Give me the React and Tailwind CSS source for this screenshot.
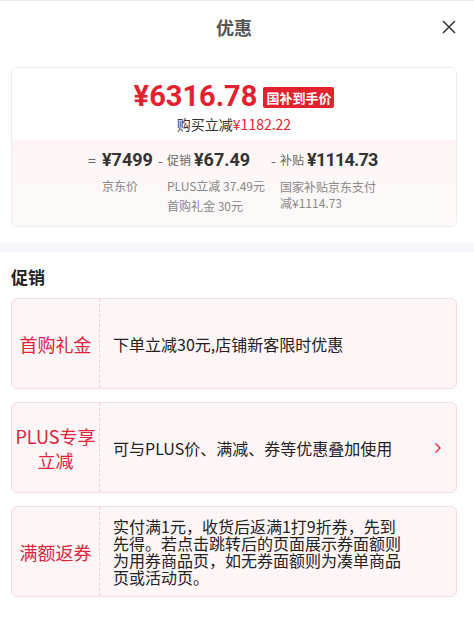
import React from "react";

const CJK = "font-['Noto_Sans_CJK_SC','Noto_Sans',sans-serif]";
const NUM = "font-['Roboto','Noto_Sans_CJK_SC',sans-serif]";

function Promo({ label, children, chevron, textClass }) {
  return (
    <div className="flex h-[91px] rounded-[6px] border border-[#f3dcdf] bg-[#fdf5f6]">
      <div className="flex w-[88px] shrink-0 items-center justify-center border-r border-dashed border-[#e6d3d6] text-center text-[18px] leading-[24px] text-[#e0243c]">
        {label}
      </div>
      <div className="flex flex-1 items-center pl-[13px] pr-[14px]">
        <div className={"flex-1 text-[#222] " + (textClass || "text-[16px] leading-[20px]")}>{children}</div>
        {chevron && (
          <svg width="8" height="12" viewBox="0 0 8 12" className="shrink-0">
            <polyline points="1.5,1.5 6,6 1.5,10.5" fill="none" stroke="#e0243c" strokeWidth="1.4" />
          </svg>
        )}
      </div>
    </div>
  );
}

export default function App() {
  return (
    <div className={"min-h-[633px] w-[474px] border-t border-[#e8e8e8] bg-white " + CJK}>
      {/* header */}
      <div className="relative flex h-[52px] items-center justify-center pr-[6px]">
        <span className="text-[18px] font-bold text-[#555]">优惠</span>
        <svg width="14" height="14" viewBox="0 0 14 14" className="absolute right-[18px] top-[19px]">
          <path d="M1 1 L13 13 M13 1 L1 13" stroke="#333" strokeWidth="1.5" fill="none" />
        </svg>
      </div>

      {/* price card */}
      <div className="pl-[11px] pr-[17px] pt-[14px]">
        <div className="overflow-hidden rounded-[6px] border border-[#ececec]">
          <div className="flex flex-col items-center bg-white pb-[7px] pt-[10px]">
            <div className="flex h-[36px] items-center">
              <span className={"text-[29px] font-bold leading-[36px] text-[#e4212f] " + NUM}>¥6316.78</span>
              <span className="ml-[6px] mt-[3px] rounded-[2px] bg-[#e4212f] px-[3px] text-[13px] font-bold leading-[21px] text-white">国补到手价</span>
            </div>
            <div className="mt-[1px] text-[14px] leading-[18px] text-[#333]">
              购买立减<span className="text-[#e4212f]">¥1182.22</span>
            </div>
          </div>
          <div className="flex justify-center bg-gradient-to-b from-[#fdf5f5] to-[#fdf9f9] pb-[10px] pt-[8px]">
            <div className="flex">
              <span className="w-[14px] text-[14px] leading-[24px] text-[#666]">=</span>
              <div className="flex flex-col">
                <span className={"text-[18px] font-bold leading-[24px] text-[#333] " + NUM}>¥7499</span>
                <span className="mt-[4px] text-[12px] leading-[20px] text-[#888]">京东价</span>
              </div>
            </div>
            <div className="ml-[5px] flex">
              <span className="w-[9px] text-[14px] leading-[24px] text-[#666]">-</span>
              <div className="flex flex-col">
                <div className="flex items-center leading-[24px]">
                  <span className="text-[12px] text-[#666]">促销</span>
                  <span className={"ml-[3px] text-[18px] font-bold text-[#333] " + NUM}>¥67.49</span>
                </div>
                <span className="mt-[4px] text-[12px] leading-[20px] text-[#888]">PLUS立减 37.49元</span>
                <span className="text-[12px] leading-[20px] text-[#888]">首购礼金 30元</span>
              </div>
            </div>
            <div className="ml-[6px] flex">
              <span className="w-[9px] text-[14px] leading-[24px] text-[#666]">-</span>
              <div className="flex w-[100px] flex-col">
                <div className="flex items-center leading-[24px]">
                  <span className="text-[12px] text-[#666]">补贴</span>
                  <span className={"ml-[3px] text-[18px] font-bold tracking-[-0.8px] text-[#333] " + NUM}>¥1114.73</span>
                </div>
                <span className="mt-[7px] w-[98px] text-[12px] leading-[16px] text-[#888]">国家补贴京东支付减¥1114.73</span>
              </div>
            </div>
          </div>
        </div>
      </div>

      {/* band */}
      <div className="mt-[16px] h-[9px] bg-[#f5f7fa]" />

      {/* promotions */}
      <div className="pl-[11px] pr-[17px] pt-[13px]">
        <div className="text-[17px] font-bold leading-[24px] text-[#222]">促销</div>
        <div className="mt-[9px] flex flex-col gap-[13px]">
          <Promo label="首购礼金">下单立减30元,店铺新客限时优惠</Promo>
          <Promo label={<span>PLUS专享<br />立减</span>} chevron>
            可与PLUS价、满减、券等优惠叠加使用
          </Promo>
          <Promo label="满额返券" textClass="max-w-[292px] text-[16px] leading-[17px]">
            实付满1元，收货后返满1打9折券，先到先得。若点击跳转后的页面展示券面额则为用券商品页，如无券面额则为凑单商品页或活动页。
          </Promo>
        </div>
      </div>
    </div>
  );
}
